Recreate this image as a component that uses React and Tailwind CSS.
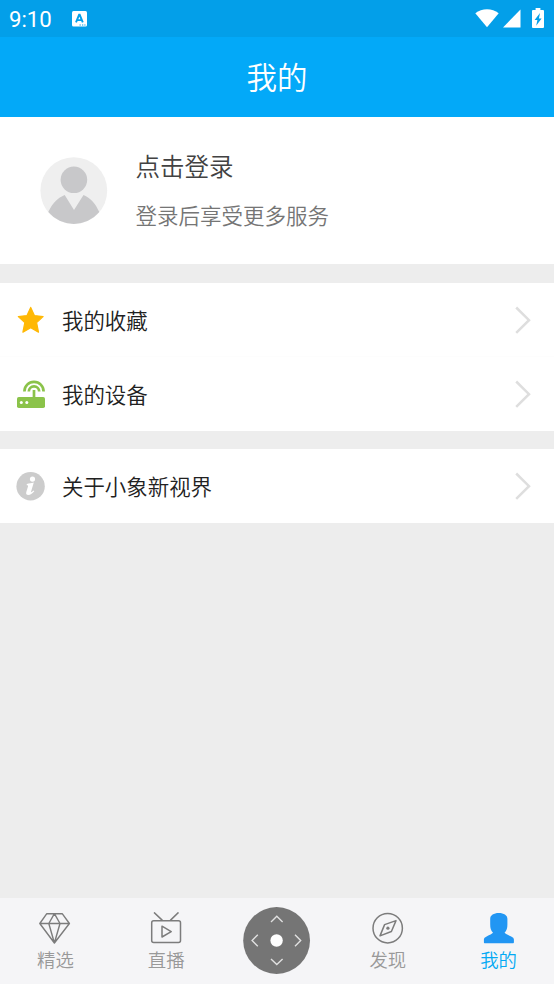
import React from "react";

const StatusBar = () => {
    return (
        <div className="flex h-[37px] shrink-0 items-center bg-[#039fe9] pl-[9px] pr-[10px] text-white">
            <span className="w-[63px] pt-[1px] font-[Roboto,sans-serif] text-[22.2px] leading-none font-[450]">9:10</span>
            <svg width="15" height="16" viewBox="0 0 15 16">
                <rect x="0" y="0" width="15" height="15.5" rx="1.5" fill="#fff" />
                <path d="M4 11.4 7.1 3.8h.6L10.8 11.4M5.2 9.1h4.4" fill="none" stroke="#039fe9" strokeWidth="1.9" />
                <path d="M7.5 14h1.3M10 14h1.3M12.3 14h1.2" stroke="#039fe9" strokeWidth="1.2" />
            </svg>
            <div className="ml-auto flex items-center">
                <svg width="24" height="19" viewBox="0 0 24 19">
                    <path d="M0.3 4.2C7-1 17-1 23.7 4.2L12 18.2z" fill="#fff" />
                </svg>
                <svg className="ml-[4px]" width="18" height="19" viewBox="0 0 18 19">
                    <path d="M17.5 0.5v18H0z" fill="#fff" />
                </svg>
                <svg className="mb-[2px] ml-[11px]" width="12" height="20" viewBox="0 0 12 20">
                    <path d="M3.6 0h4.8v2H11a1 1 0 0 1 1 1v16a1 1 0 0 1-1 1H1a1 1 0 0 1-1-1V3a1 1 0 0 1 1-1h2.6z" fill="#fff" />
                    <path d="M8 5 2.6 12h2.8L4.2 17.8l5.4-7.4H6.9z" fill="#039fe9" />
                </svg>
            </div>
        </div>
    );
};

const Avatar = () => {
    return (
        <svg width="68" height="68" viewBox="0 0 68 68">
            <circle cx="33.8" cy="33.6" r="33.4" fill="#efefef" />
            <circle cx="33.9" cy="22.8" r="13.3" fill="#c8c8ca" />
            <path d="M24.7 37.9C18 40.6 12.3 46.1 8.3 55.1a33.4 33.4 0 0 0 51 0C55.7 46.6 50.5 40.6 43.5 37.9L34 53.1z" fill="#c8c8ca" />
        </svg>
    );
};

const StarIcon = () => {
    return (
        <svg width="30" height="30" viewBox="0 0 30 30">
            <path
                d="M14.7 2.4 18.4 10.6 27.1 11.6 20.6 17.6 22.5 27.2 14.7 22.8 6.9 27.2 8.8 17.6 2.3 11.6 11 10.6z"
                fill="#ffb805"
                stroke="#ffb805"
                strokeWidth="1.2"
                strokeLinejoin="round"
            />
        </svg>
    );
};

const RouterIcon = () => {
    return (
        <svg width="30" height="30" viewBox="0 0 30 30">
            <rect x="1" y="18" width="28" height="11" rx="1.8" fill="#8bc34a" />
            <path
                d="M8.4 12.4a9.6 9.6 0 0 1 19.2 0M12.8 12.6a5.2 5.2 0 0 1 10.4 0M18 11V19"
                fill="none"
                stroke="#8bc34a"
                strokeWidth="2.7"
            />
            <circle cx="5.3" cy="23.5" r="1.5" fill="#fff" />
            <circle cx="10.8" cy="23.5" r="1.5" fill="#fff" />
        </svg>
    );
};

const InfoIcon = () => {
    return (
        <svg width="30" height="30" viewBox="0 0 30 30">
            <circle cx="14.6" cy="15.2" r="14.2" fill="#cccccc" />
            <circle cx="16.5" cy="8.1" r="2.6" fill="#fff" />
            <path d="M10.8 12.9c2.4-.2 4.4-.6 7-1.3l-2.8 9.1c-.2.9.5.6 2.6-1.2l.7.8c-2 2.5-4 3.6-6 3.6-1.9 0-2.5-1.3-2-3l1.7-5.5c.2-.8-.1-1-1.3-1.1z" fill="#fff" />
        </svg>
    );
};

const MenuRow = ({ icon, label, divider }) => {
    return (
        <div className={divider ? "flex h-[74px] items-center border-b border-[#fdfdfd] bg-white pl-[16px] pr-[22px]" : "flex h-[74px] items-center bg-white pl-[16px] pr-[22px]"}>
            {icon}
            <span className="ml-[16px] text-[21.45px] leading-8 text-[#212121]">{label}</span>
            <svg className="ml-auto" width="17" height="28" viewBox="0 0 17 28">
                <path d="M1.2 1.5 14 14.2 1.2 26.8" fill="none" stroke="#dedede" strokeWidth="2.5" />
            </svg>
        </div>
    );
};

const DiamondIcon = () => {
    return (
        <svg width="32" height="32" viewBox="0 0 32 32" fill="none" stroke="#7c7c7c" strokeWidth="1.4" strokeLinejoin="round">
            <path d="M7.8 1.7h15.4l7.2 9.8L15.4 31 .8 11.5zM.8 11.5h29.6M15.4 1.7l-5.6 9.8L15.4 31l5.6-19.5z" />
        </svg>
    );
};

const TvIcon = () => {
    return (
        <svg width="32" height="32" viewBox="0 0 32 32" fill="none" stroke="#7c7c7c" strokeWidth="1.5" strokeLinejoin="round">
            <rect x="1.7" y="8.7" width="28.8" height="21.8" rx="2" />
            <path d="m4 .4 8.4 8M28.5.4l-8.2 8M12 14.2v10.8l9.2-5.4z" />
        </svg>
    );
};

const CompassIcon = () => {
    return (
        <svg width="32" height="32" viewBox="0 0 32 32" fill="none" stroke="#7c7c7c" strokeWidth="1.5" strokeLinejoin="round">
            <circle cx="15.7" cy="16.2" r="14.7" />
            <path d="M24 8.6 12.6 12.6 8 23.9l11.4-4.4z" />
            <circle cx="15.9" cy="16.2" r="1.6" fill="#7c7c7c" stroke="none" />
        </svg>
    );
};

const UserIcon = () => {
    return (
        <svg width="32" height="32" viewBox="0 0 32 32">
            <path
                d="M15.8 1C20.8 1 24.4 3.2 24.4 6.8V12.5C24.4 16 23.8 18.4 21.6 20.8C22.6 22 25 22.9 28.2 24.5C30 25.4 30.9 26.2 30.9 27.6V30.2C30.9 30.9 30.5 31.3 29.8 31.3H2C1.3 31.3 .9 30.9 .9 30.2V27.6C.9 26.2 1.8 25.4 3.6 24.5C6.8 22.9 9 22 10 20.8C7.8 18.4 7.2 16 7.2 12.5V6.8C7.2 3.2 10.8 1 15.8 1Z"
                fill="#2196f3"
            />
        </svg>
    );
};

const RemoteButton = () => {
    return (
        <svg width="68" height="68" viewBox="0.4 0.5 68 68" fill="none">
            <circle cx="34" cy="34" r="33.4" fill="#757575" />
            <circle cx="34" cy="34" r="6.2" fill="#fff" />
            <path d="m28.4 15.4 5.8-5.7 5.8 5.7M28.4 52.4l5.8 5.7 5.8-5.7M15.2 28.3 9.5 34l5.7 5.7M52.4 28.3l5.7 5.7-5.7 5.7" stroke="#e0e0e0" strokeWidth="1.4" />
        </svg>
    );
};

const TabItem = ({ icon, label, active }) => {
    return (
        <div className="flex flex-1 flex-col items-center pt-[14px]">
            {icon}
            <span className={active ? "text-[18.4px] leading-[30px] text-[#03a9f4]" : "text-[18.4px] leading-[30px] text-[#999999]"}>{label}</span>
        </div>
    );
};

const App = () => {
    return (
        <div className="flex h-[984px] w-[554px] flex-col overflow-hidden bg-[#ededed] font-['Noto_Sans_CJK_SC',sans-serif] font-[350]">
            <StatusBar />

            <div className="flex h-[80px] shrink-0 items-center justify-center bg-[#03a9f8] text-[30.5px] text-white">
                我的
            </div>

            {/* Login card */}
            <div className="flex h-[147px] shrink-0 items-center bg-white pl-[40px]">
                <Avatar />
                <div className="mb-[2px] ml-[27.5px] flex flex-col">
                    <span className="text-[24.5px] leading-[49px] text-[#424242]">点击登录</span>
                    <span className="text-[21.5px] leading-[49px] text-[#757575]">登录后享受更多服务</span>
                </div>
            </div>

            <div className="mt-[19px]">
                <MenuRow icon={<StarIcon />} label="我的收藏" divider />
                <MenuRow icon={<RouterIcon />} label="我的设备" />
            </div>
            <div className="mt-[18px]">
                <MenuRow icon={<InfoIcon />} label="关于小象新视界" />
            </div>

            {/* Bottom tabs */}
            <div className="mt-auto flex h-[86px] shrink-0 bg-[#f5f5f7]">
                <TabItem icon={<DiamondIcon />} label="精选" />
                <TabItem icon={<TvIcon />} label="直播" />
                <div className="flex flex-1 items-center justify-center">
                    <RemoteButton />
                </div>
                <TabItem icon={<CompassIcon />} label="发现" />
                <TabItem icon={<UserIcon />} label="我的" active />
            </div>
        </div>
    );
};

export default App;
